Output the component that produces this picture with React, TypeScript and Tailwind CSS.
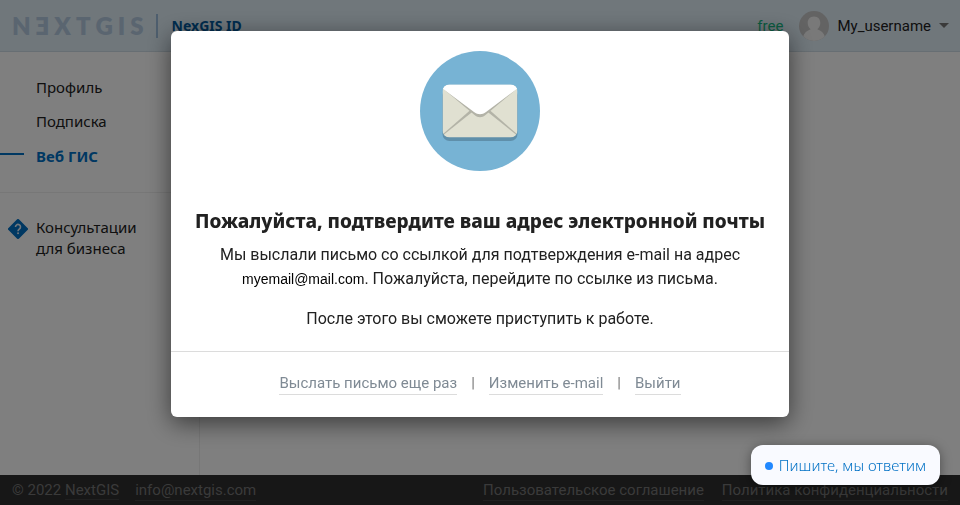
import React from "react";

const LOGO_LETTERS = ["N", "Ǝ", "X", "T", "G", "I", "S"];

function Logo() {
  return (
    <a
      href="#home"
      aria-label="NextGIS"
      className="flex gap-[5px] font-['Lato',sans-serif] text-2xl leading-6 font-extrabold text-[#b4cae0]"
    >
      {LOGO_LETTERS.map((letter) => (
        <span key={letter}>{letter}</span>
      ))}
    </a>
  );
}

function Avatar() {
  return (
    <svg viewBox="0 0 30 30" className="size-[30px] shrink-0" aria-hidden="true">
      <defs>
        <clipPath id="avatar-clip">
          <circle cx="15" cy="15" r="15" />
        </clipPath>
      </defs>
      <g clipPath="url(#avatar-clip)">
        <rect width="30" height="30" fill="#c6c6c6" />
        <path
          d="M15 5.500c-4 0-6.300 2.800-6.300 6.400 0 2.500 1.200 5 3 6.300C8 19.400 5 22 4 26v4h22v-4c-1-4-4-6.600-7.700-7.800 1.800-1.300 3-3.800 3-6.300 0-3.600-2.300-6.400-6.300-6.400z"
          fill="#f2f2f2"
        />
      </g>
    </svg>
  );
}

function Header() {
  return (
    <header className="flex h-[52px] items-center justify-between border-b border-[#cfdde6] bg-[#e0eef7] pr-[11px] pl-3">
      <div className="flex items-center">
        <Logo />
        <span className="ml-3 h-6 w-[2px] bg-[#9dbddc]" />
        <a
          href="#id"
          className="ml-3.5 font-['Noto_Sans',sans-serif] text-sm leading-6 font-bold text-[#005a9e]"
        >
          NexGIS ID
        </a>
      </div>
      <div className="flex items-center font-['Roboto',sans-serif] text-[15px] leading-6">
        <a href="#plan" className="text-[#17b883]">
          free
        </a>
        <button type="button" className="ml-4 flex items-center gap-2 text-[#212121]">
          <Avatar />
          <span>My_username</span>
          <svg viewBox="0 0 10 5" className="h-[5px] w-[10px]" aria-hidden="true">
            <path d="M0 0h10L5 5z" fill="#757575" />
          </svg>
        </button>
      </div>
    </header>
  );
}

function Sidebar() {
  return (
    <aside className="w-[200px] shrink-0 border-r border-[#eeeeee] font-['Noto_Sans',sans-serif] text-[15px] text-[#212121]">
      <nav className="border-b border-[#eeeeee] py-[18px]">
        <a href="#profile" className="block pl-9 leading-[34px]">
          Профиль
        </a>
        <a href="#subscription" className="block pl-9 leading-[34px]">
          Подписка
        </a>
        <a href="#webgis" aria-current="page" className="flex items-start leading-9 font-bold text-[#0070c5]">
          <span className="mt-[15px] mr-3 h-[2px] w-6 bg-[#0070c5]" />
          Веб ГИС
        </a>
      </nav>
      <a href="#consulting" className="flex items-start gap-2 pt-6 pl-2 leading-[21px]">
        <svg viewBox="0 0 20 20" className="mt-0.5 size-5 shrink-0" aria-hidden="true">
          <path
            d="M8.900.500a1.500 1.500 0 0 1 2.200 0l8.400 8.400a1.500 1.500 0 0 1 0 2.200l-8.400 8.400a1.500 1.500 0 0 1-2.200 0L.500 11.100a1.500 1.500 0 0 1 0-2.200z"
            fill="#0070c5"
          />
          <path d="M7.500 8a2.500 2.500 0 1 1 3.900 2c-.900.700-1.400 1-1.400 2.200" fill="none" stroke="#e4eef7" strokeWidth="1.600" />
          <rect x="9.200" y="13.400" width="1.700" height="1.700" fill="#e4eef7" />
        </svg>
        <span>
          Консультации
          <br />
          для бизнеса
        </span>
      </a>
    </aside>
  );
}

function Footer() {
  const link = "border-b border-[#414141] leading-5";
  return (
    <footer className="flex h-[30px] items-start justify-between bg-[#2e2e2e] px-3 pt-[5px] font-['Roboto',sans-serif] text-[15px] leading-5 text-[#757575]">
      <div className="flex gap-4">
        <span>
          © 2022{" "}
          <a href="#nextgis" className={link}>
            NextGIS
          </a>
        </span>
        <a href="#mail" className={link}>
          info@nextgis.com
        </a>
      </div>
      <div className="flex gap-[18px]">
        <a href="#terms" className={link}>
          Пользовательское соглашение
        </a>
        <a href="#privacy" className={link}>
          Политика конфиденциальности
        </a>
      </div>
    </footer>
  );
}

function EnvelopeIcon() {
  return (
    <svg viewBox="0 0 120 120" className="size-[120px]" aria-hidden="true">
      <defs>
        <clipPath id="envelope-clip">
          <rect x="22.500" y="33.500" width="75" height="53" rx="7" />
        </clipPath>
      </defs>
      <circle cx="60" cy="60" r="60" fill="#77b3d4" />
      <rect x="22.500" y="37" width="75" height="53" rx="7" fill="#5f8faa" />
      <g clipPath="url(#envelope-clip)">
        <rect x="22.500" y="33.500" width="75" height="53" fill="#e0e0d1" />
        <path d="M23 83L51 58.500l2.500 1.500L24 83.500z" fill="#b3b3a7" />
        <path d="M97 83L69 58.500 66.500 60 96 83.500z" fill="#b3b3a7" />
        <path d="M23.500 38l31 26c3.500 2.900 7.500 2.900 11 0l31-26z" fill="#b3b3a7" />
        <path d="M22.500 33.500v4l31.500 23.500c4 3 8 3 12 0l31.500-23.500v-4z" fill="#fff" />
      </g>
    </svg>
  );
}

function Separator() {
  return <span className="text-[#757575]">|</span>;
}

function ConfirmDialog() {
  const action = "cursor-pointer border-b border-[#dcdcdc] leading-[22px]";
  return (
    <div className="fixed inset-0 flex items-start justify-center bg-black/50 pt-[31px]">
      <section
        role="dialog"
        aria-modal="true"
        aria-labelledby="confirm-title"
        className="w-full max-w-[618px] rounded-md bg-white font-['Roboto',sans-serif] text-[#212121] shadow-[0_6px_24px_rgba(0,0,0,0.55)]"
      >
        <div className="flex flex-col items-center px-5 pt-5 pb-5 text-center">
          <EnvelopeIcon />
          <h1
            id="confirm-title"
            className="mt-9 font-['Noto_Sans',sans-serif] text-[19px] leading-7 font-extrabold"
          >
            Пожалуйста, подтвердите ваш адрес электронной почты
          </h1>
          <p className="mt-2 text-base leading-6">
            Мы выслали письмо со ссылкой для подтверждения e-mail на адрес
            <br />
            <span className="font-['Liberation_Sans',sans-serif] text-sm leading-6 text-black">myemail@mail.com</span>
            . Пожалуйста, перейдите по ссылке из письма.
          </p>
          <p className="mt-4 text-base leading-6">После этого вы сможете приступить к работе.</p>
        </div>
        <div className="flex justify-center gap-3.5 border-t border-[#dcdcdc] pt-5 pb-[22px] text-[15px] leading-[22px] text-[#7f8a94]">
          <button type="button" className={action}>
            Выслать письмо еще раз
          </button>
          <Separator />
          <button type="button" className={action}>
            Изменить e-mail
          </button>
          <Separator />
          <button type="button" className={action}>
            Выйти
          </button>
        </div>
      </section>
    </div>
  );
}

function ChatButton() {
  return (
    <button
      type="button"
      className="fixed right-5 bottom-5 flex h-10 items-center gap-1.5 rounded-xl bg-[#f9faff] px-3.5 font-['Noto_Sans',sans-serif] text-[15px] leading-5 font-light text-[#0070c5] shadow-[0_2px_12px_rgba(0,0,0,0.4)]"
    >
      <span className="mt-0.5 size-2 rounded-full bg-[#2188ff]" />
      Пишите, мы ответим
    </button>
  );
}

export default function App() {
  return (
    <div className="flex min-h-screen flex-col bg-white">
      <Header />
      <main className="flex grow">
        <Sidebar />
      </main>
      <Footer />
      <ConfirmDialog />
      <ChatButton />
    </div>
  );
}
